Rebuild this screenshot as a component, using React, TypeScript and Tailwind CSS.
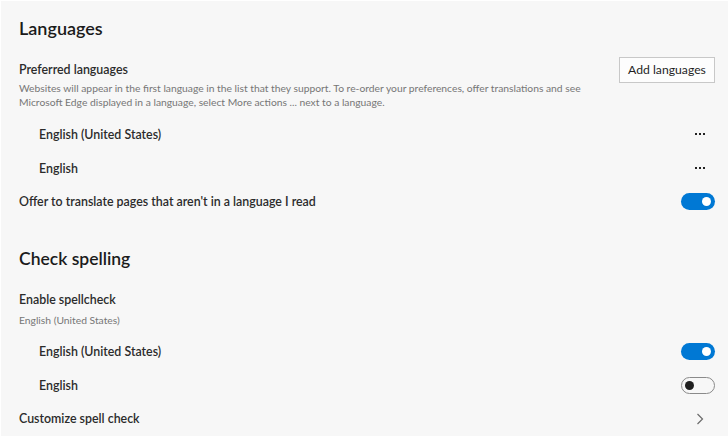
import React from "react";

const font = { fontFamily: 'Lato, "Noto Sans", sans-serif' };

function Dots() {
  return (
    <div className="w-[30px] flex justify-center items-center gap-[2px]">
      <span className="w-[2px] h-[2px] bg-[#222]" />
      <span className="w-[2px] h-[2px] bg-[#222]" />
      <span className="w-[2px] h-[2px] bg-[#222]" />
    </div>
  );
}

function Toggle({ on }: { on: boolean }) {
  return on ? (
    <div className="w-[34px] h-[17px] rounded-full bg-[#0078d4] flex items-center justify-end pr-[4px]">
      <span className="w-[9px] h-[9px] rounded-full bg-white" />
    </div>
  ) : (
    <div className="w-[34px] h-[17px] rounded-full border border-[#8a8a8a] flex items-center justify-start pl-[3px]">
      <span className="w-[9px] h-[9px] rounded-full bg-[#1f1f1f]" />
    </div>
  );
}

function Chevron() {
  return (
    <div className="w-[30px] flex justify-center">
      <svg width="8" height="12" viewBox="0 0 8 12" fill="none">
        <path d="M1.5 1 L6.5 6 L1.5 11" stroke="#6b6b6b" strokeWidth="1.2" />
      </svg>
    </div>
  );
}

function Row({ label, indent, right, h = "h-[34px]" }: { label: string; indent?: boolean; right: React.ReactNode; h?: string }) {
  return (
    <div className={`${h} flex items-center justify-between`}>
      <span className={`pt-[2px] text-[12.4px] font-semibold text-[#2b2b2b] whitespace-nowrap ${indent ? "pl-[20px]" : ""}`}>{label}</span>
      {right}
    </div>
  );
}

export default function App() {
  return (
    <div style={font} className="w-[728px] h-[436px] bg-[#f7f7f7] border-t border-l border-white overflow-hidden pl-[18px] pr-[13px] pt-[11px]">
      <div className="h-[32px] flex items-center text-[18px] font-semibold text-[#1b1b1b]">Languages</div>
      <div className="mt-[13px] flex items-start justify-between">
        <div className="pt-[4px]">
          <div className="h-[18px] leading-[18px] text-[12.4px] font-semibold text-[#2b2b2b]">Preferred languages</div>
          <div className="mt-[2px] text-[10.3px] leading-[14px] text-[#767676] whitespace-nowrap">
            Websites will appear in the first language in the list that they support. To re-order your preferences, offer translations and see
            <br />
            Microsoft Edge displayed in a language, select More actions ... next to a language.
          </div>
        </div>
        <button className="shrink-0 whitespace-nowrap h-[26px] w-[96px] border border-[#c8c8c8] bg-[#fdfdfd] text-[12.2px] text-[#1f1f1f] flex items-center justify-center">
          Add languages
        </button>
      </div>
      <div className="mt-[8px]">
        <Row label="English (United States)" indent right={<Dots />} />
        <Row label="English" indent right={<Dots />} />
        <Row label="Offer to translate pages that aren't in a language I read" right={<Toggle on />} h="h-[33px]" />
      </div>
      <div className="mt-[25px] h-[32px] flex items-center text-[17.5px] font-semibold text-[#1b1b1b]">Check spelling</div>
      <div className="mt-[16px] h-[18px] leading-[18px] text-[12.4px] font-semibold text-[#2b2b2b]">Enable spellcheck</div>
      <div className="mt-[3px] h-[16px] leading-[16px] text-[10.3px] text-[#767676]">English (United States)</div>
      <div className="mt-[6px]">
        <Row label="English (United States)" indent right={<Toggle on />} />
        <Row label="English" indent right={<Toggle on={false} />} />
        <Row label="Customize spell check" right={<Chevron />} h="h-[33px]" />
      </div>
    </div>
  );
}
